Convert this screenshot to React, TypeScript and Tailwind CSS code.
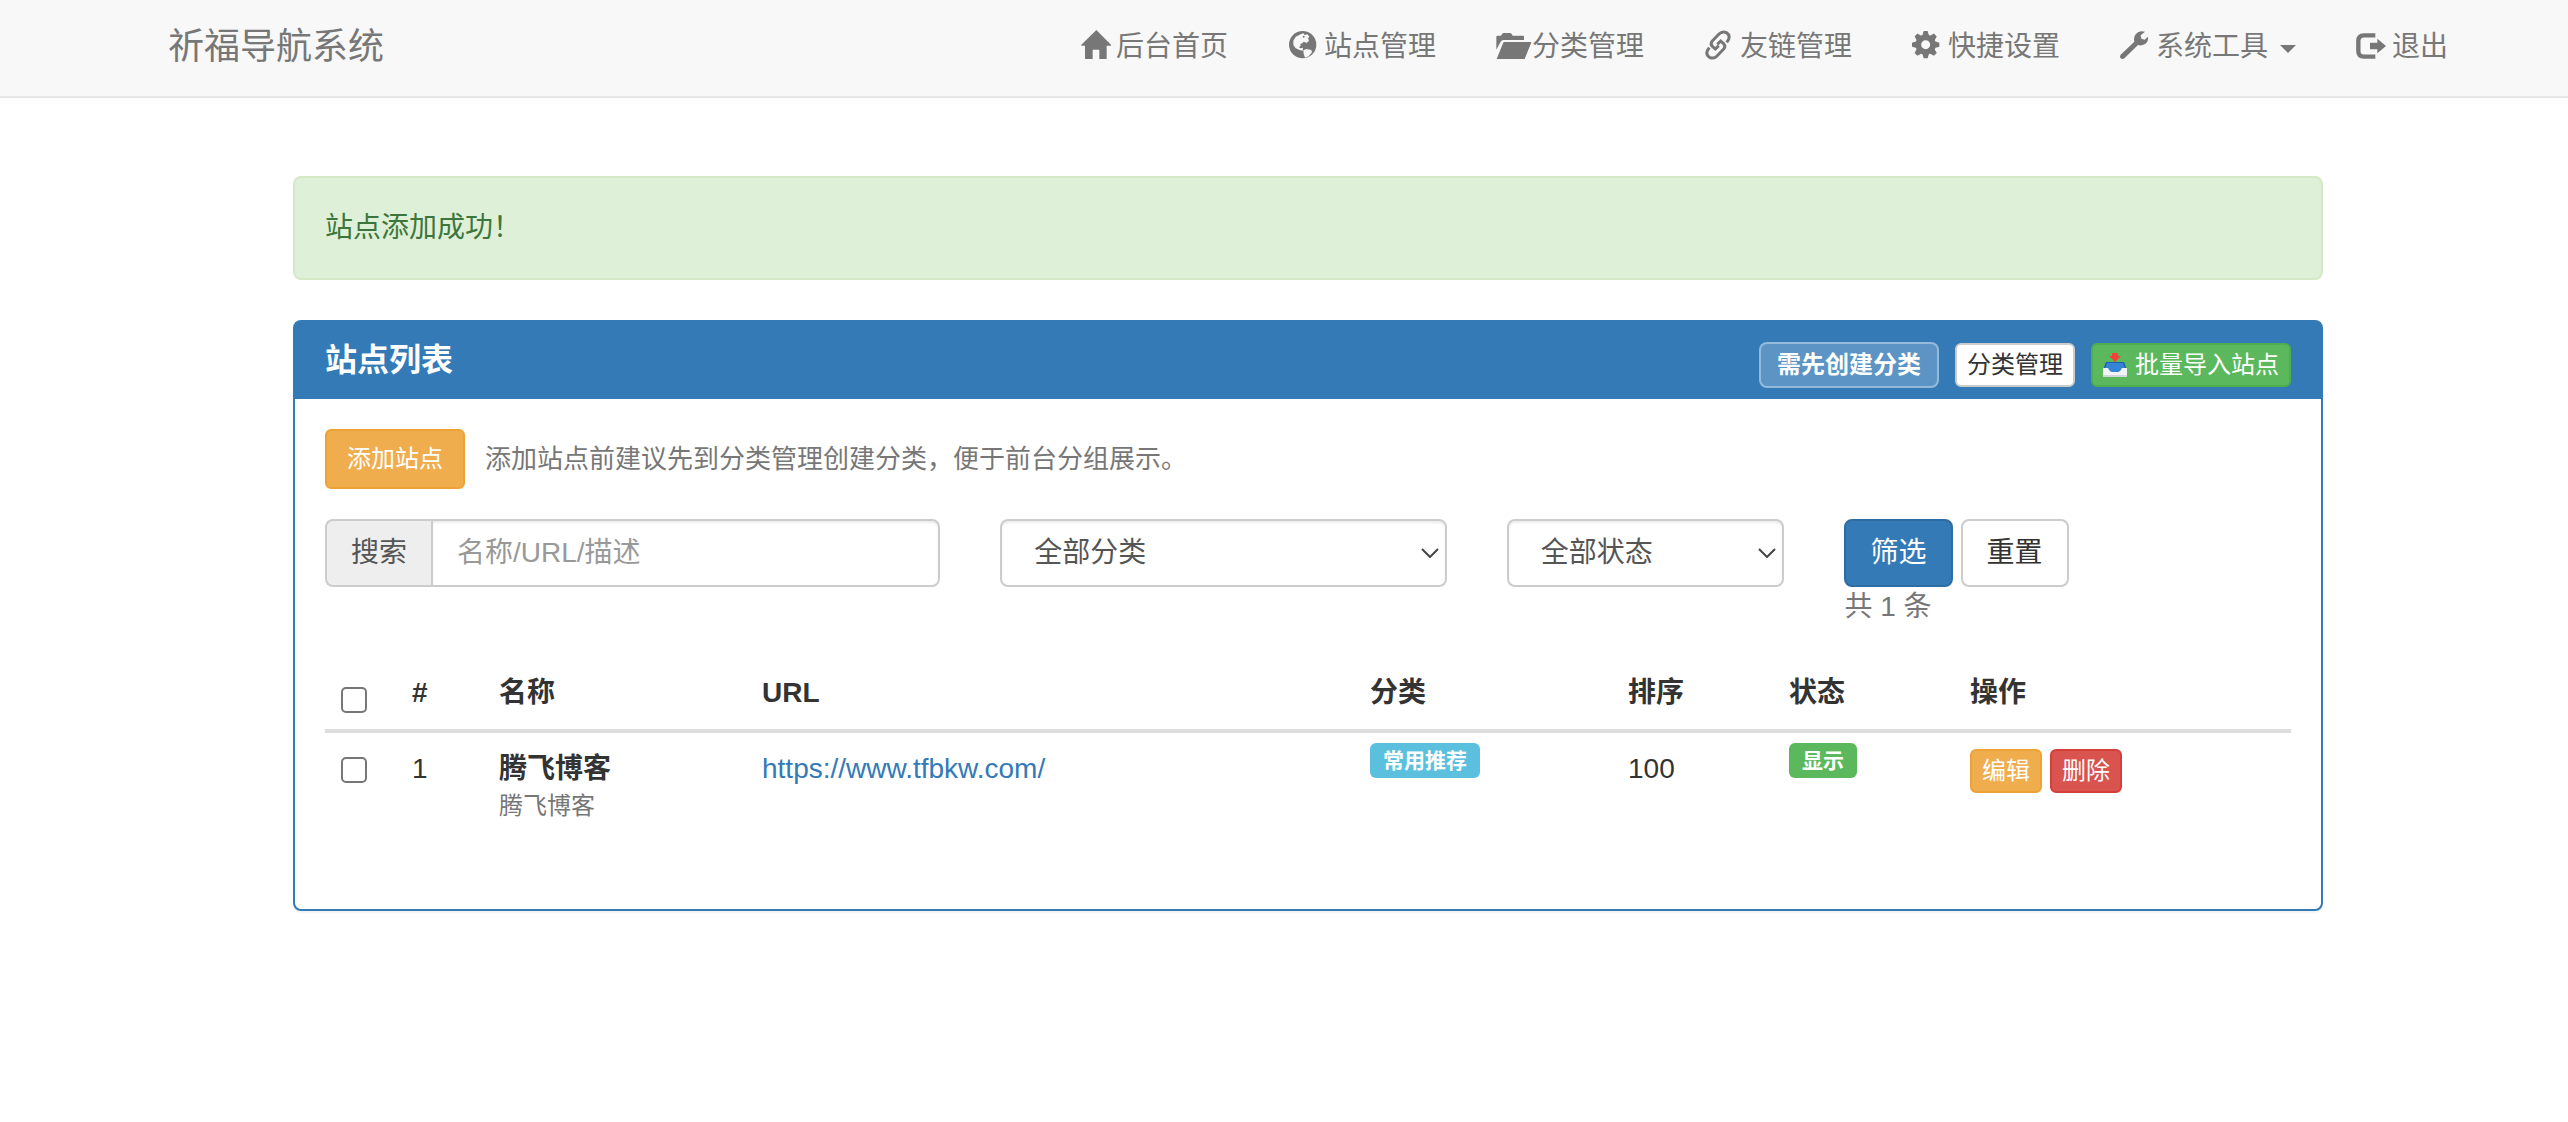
import { useState, type ReactNode } from 'react';

type IconName = 'home' | 'globe' | 'folder' | 'link' | 'gear' | 'wrench' | 'logout';

const iconShapes: Record<IconName, ReactNode> = {
  home: (
    <path d="M49 -9 L93 35 Q94 38 91 38 H80 V78 H58 V50 H38 V78 H15 V38 H6 Q2 38 4 35 Z" />
  ),
  globe: (
    <>
      <circle cx="44" cy="35" r="41" />
      <path
        className="fill-[#f8f8f8]"
        d="M38 4 L46 1 L50 6 L58 4 L64 11 L60 16 L63 23 L56 30 L47 26 L43 31 L37 33 L38 38 L33 43 L38 46 L45 44 L44 53 L36 52 L23 46 L16 36 L16 23 L23 11 Z"
      />
      <path className="fill-[#f8f8f8]" d="M46 52 L55 48 L70 51 L72 58 L62 70 L51 74 L47 62 Z" />
      <circle cx="47" cy="11" r="3" />
    </>
  ),
  folder: (
    <>
      <path d="M1 12 Q1 8 5 8 H15 L18 3 Q20 0 23 0 H42 Q45 0 47 3 L50 8 H81 Q84 8 84 11 V21 H22 Q17 21 14 26 L1 50 Z" />
      <path d="M26 27 H103 Q107 27 105 31 L86 78 H2 L21 31 Q22 27 26 27 Z" />
    </>
  ),
  link: (
    <g fill="none" stroke="currentColor" strokeWidth="9">
      <path d="M68 28 L74 19 Q79 6 67 -1 Q55 -7 45 3 L24 25 Q18 34 26 41 L34 48 L44 38" />
      <path d="M16 44 L10 53 Q5 66 17 73 Q29 79 39 69 L60 47 Q66 38 58 31 L50 24 L40 34" />
    </g>
  ),
  gear: (
    <g transform="translate(41 35)">
      <circle r="22" fill="none" stroke="currentColor" strokeWidth="17" />
      {[0, 45, 90, 135, 180, 225, 270, 315].map((angle) => (
        <path key={angle} d="M-10 -27 L-6 -41 H6 L10 -27 Z" transform={`rotate(${angle})`} />
      ))}
    </g>
  ),
  wrench: (
    <path d="M2 65 L43 26 Q39 7 54 -2 Q64 -8 75 -4 L62 7 L64 17 L74 20 L84 11 Q86 25 75 33 Q65 40 54 36 L14 75 Q8 80 2 76 Q-3 71 2 65 Z" />
  ),
  logout: (
    <>
      <path
        fill="none"
        stroke="currentColor"
        strokeWidth="13"
        d="M58 7 H24 Q7 7 7 24 V54 Q7 71 24 71 H58"
      />
      <path d="M42 29 H64 V17 L90 39 L64 61 V49 H42 Z" />
    </>
  ),
};

function Icon({ name }: { name: IconName }) {
  return (
    <svg viewBox="0 0 84 84" className="h-7 w-7 shrink-0 overflow-visible fill-current" aria-hidden="true">
      {iconShapes[name]}
    </svg>
  );
}

function InboxIcon() {
  return (
    <svg viewBox="0 0 24 24" className="h-6 w-6 shrink-0" aria-hidden="true">
      <path d="M3 9 H21 L24 17 H0 Z" fill="#1f5fae" />
      <path d="M4 10 H20 L22 16 L16 20 H8 L2 16 Z" fill="#3584d6" />
      <path d="M0 15 H5 Q7 19 9 19 H15 Q17 19 19 15 H24 V23 Q24 24 23 24 H1 Q0 24 0 23 Z" fill="#f1f3f4" />
      <path d="M0 22 H24 V23 Q24 24 23 24 H1 Q0 24 0 23 Z" fill="#d3d6da" />
      <path d="M9 0 H15 V3 H18 L12 9 L6 3 H9 Z" fill="#f0443b" />
    </svg>
  );
}

const navItems: { label: string; icon: IconName }[] = [
  { label: '后台首页', icon: 'home' },
  { label: '站点管理', icon: 'globe' },
  { label: '分类管理', icon: 'folder' },
  { label: '友链管理', icon: 'link' },
  { label: '快捷设置', icon: 'gear' },
];

const sites = [
  {
    id: 1,
    name: '腾飞博客',
    description: '腾飞博客',
    url: 'https://www.tfbkw.com/',
    category: '常用推荐',
    order: 100,
    status: '显示',
  },
];

function Navbar() {
  const itemClass = 'flex items-center gap-2 px-[30px] pt-[27px] pb-[29px] leading-10';

  return (
    <header className="border-b-2 border-[#e7e7e7] bg-[#f8f8f8] pl-12 text-[#777]">
      <div className="mx-auto flex max-w-[2340px] justify-between">
        <a href="#" className="px-[30px] pt-[27px] pb-[29px] text-4xl leading-10">
          祈福导航系统
        </a>
        <nav className="flex">
          {navItems.map((item) => (
            <a key={item.label} href="#" className={itemClass}>
              <Icon name={item.icon} />
              {item.label}
            </a>
          ))}
          <button type="button" aria-haspopup="menu" className={itemClass}>
            <Icon name="wrench" />
            系统工具
            <svg viewBox="0 0 16 8" className="mt-1 ml-1 h-2 w-4 fill-current" aria-hidden="true">
              <path d="M0 0 H16 L8 8 Z" />
            </svg>
          </button>
          <a href="#" className={itemClass}>
            <Icon name="logout" />
            退出
          </a>
        </nav>
      </div>
    </header>
  );
}

function Select({ label, options }: { label: string; options: string[] }) {
  return (
    <div className="relative">
      <select
        aria-label={label}
        className="h-[68px] w-full appearance-none rounded-lg border-2 border-[#ccc] bg-white px-8 text-[#555] shadow-[inset_0_2px_2px_rgba(0,0,0,0.075)]"
      >
        {options.map((option) => (
          <option key={option}>{option}</option>
        ))}
      </select>
      <svg
        viewBox="0 0 18 10"
        className="pointer-events-none absolute top-[29px] right-2 h-2.5 w-[18px] fill-none stroke-[#444] stroke-2"
        aria-hidden="true"
      >
        <path d="M1 1 L9 9 L17 1" />
      </svg>
    </div>
  );
}

function Filters() {
  const [keyword, setKeyword] = useState('');

  return (
    <form className="-mx-[30px] mt-[30px] grid grid-cols-12" onSubmit={(e) => e.preventDefault()}>
      <div className="col-span-4 px-[30px]">
        <div className="flex h-[68px]">
          <label
            htmlFor="keyword"
            className="flex shrink-0 items-center rounded-l-lg border-2 border-r-0 border-[#ccc] bg-[#eee] px-6 text-[#555]"
          >
            搜索
          </label>
          <input
            id="keyword"
            type="text"
            value={keyword}
            onChange={(e) => setKeyword(e.target.value)}
            placeholder="名称/URL/描述"
            className="min-w-0 flex-1 rounded-r-lg border-2 border-[#ccc] px-6 text-[#555] shadow-[inset_0_2px_2px_rgba(0,0,0,0.075)] placeholder:text-[#999]"
          />
        </div>
      </div>
      <div className="col-span-3 px-[30px]">
        <Select label="分类" options={['全部分类', '常用推荐']} />
      </div>
      <div className="col-span-2 px-[30px]">
        <Select label="状态" options={['全部状态', '显示', '隐藏']} />
      </div>
      <div className="col-span-3 px-[30px]">
        <div className="flex gap-2">
          <button
            type="submit"
            className="h-[68px] rounded-lg border-2 border-[#2e6da4] bg-[#337ab7] px-6 text-white"
          >
            筛选
          </button>
          <button
            type="button"
            onClick={() => setKeyword('')}
            className="h-[68px] rounded-lg border-2 border-[#ccc] bg-white px-6"
          >
            重置
          </button>
        </div>
        <div className="text-[#777]">共 {sites.length} 条</div>
      </div>
    </form>
  );
}

function Checkbox({ label }: { label: string }) {
  return (
    <input
      type="checkbox"
      aria-label={label}
      className="mt-2 block h-[26px] w-[26px] appearance-none rounded-[5px] border-2 border-[#767676] bg-white checked:bg-[#337ab7]"
    />
  );
}

function SiteTable() {
  const head = 'border-b-4 border-[#ddd] p-4 text-left align-bottom font-bold';
  const label = 'flex h-[35px] w-fit items-center rounded-md px-[13px] text-[21px] font-bold leading-none text-white';

  return (
    <table className="mt-[30px] mb-10 w-full table-fixed border-separate border-spacing-0">
      <colgroup>
        <col className="w-[71px]" />
        <col className="w-[87px]" />
        <col className="w-[263px]" />
        <col className="w-[608px]" />
        <col className="w-[258px]" />
        <col className="w-[161px]" />
        <col className="w-[181px]" />
        <col className="w-[337px]" />
      </colgroup>
      <thead>
        <tr>
          <th className={head}>
            <Checkbox label="全选" />
          </th>
          <th className={head}>#</th>
          <th className={head}>名称</th>
          <th className={head}>URL</th>
          <th className={head}>分类</th>
          <th className={head}>排序</th>
          <th className={head}>状态</th>
          <th className={head}>操作</th>
        </tr>
      </thead>
      <tbody>
        {sites.map((site) => (
          <tr key={site.id} className="align-top">
            <td className="p-4">
              <Checkbox label={site.name} />
            </td>
            <td className="p-4">{site.id}</td>
            <td className="p-4">
              <strong className="block">{site.name}</strong>
              <span className="block text-2xl leading-[34px] text-[#777]">{site.description}</span>
            </td>
            <td className="p-4">
              <a href={site.url} className="text-[#337ab7]">
                {site.url}
              </a>
            </td>
            <td className="px-4 pt-2.5">
              <span className={`${label} bg-[#5bc0de]`}>{site.category}</span>
            </td>
            <td className="p-4">{site.order}</td>
            <td className="px-4 pt-2.5">
              <span className={`${label} bg-[#5cb85c]`}>{site.status}</span>
            </td>
            <td className="p-4">
              <div className="flex gap-2">
                <button
                  type="button"
                  className="h-11 rounded-md border-2 border-[#eea236] bg-[#f0ad4e] px-2.5 text-2xl text-white"
                >
                  编辑
                </button>
                <button
                  type="button"
                  className="h-11 rounded-md border-2 border-[#d43f3a] bg-[#d9534f] px-2.5 text-2xl text-white"
                >
                  删除
                </button>
              </div>
            </td>
          </tr>
        ))}
      </tbody>
    </table>
  );
}

export default function App() {
  return (
    <div className="min-h-screen bg-white font-['Liberation_Sans','Noto_Sans_CJK_SC',sans-serif] text-[28px] leading-10 text-[#333]">
      <Navbar />
      <main className="pt-[78px] pl-12">
        <div className="mx-auto max-w-[2030px]">
          <div
            role="alert"
            className="rounded-lg border-2 border-[#d6e9c6] bg-[#dff0d8] p-[30px] text-[#3c763d]"
          >
            站点添加成功！
          </div>

          <section className="mt-10 rounded-lg border-2 border-[#337ab7] bg-white shadow-[0_2px_2px_rgba(0,0,0,0.05)]">
            <div className="flex items-start justify-between bg-[#337ab7] px-[30px] pt-5 pb-[11px] text-white">
              <h3 className="text-[32px] leading-9 font-bold">站点列表</h3>
              <div className="flex items-center gap-4 text-2xl">
                <span className="flex h-[46px] items-center rounded-lg border-2 border-white/35 bg-white/20 px-4 font-bold">
                  需先创建分类
                </span>
                <a
                  href="#"
                  className="flex h-11 items-center rounded-md border-2 border-[#ccc] bg-white px-2.5 text-[#333]"
                >
                  分类管理
                </a>
                <a
                  href="#"
                  className="flex h-11 items-center gap-2 rounded-md border-2 border-[#4cae4c] bg-[#5cb85c] px-2.5"
                >
                  <InboxIcon />
                  批量导入站点
                </a>
              </div>
            </div>

            <div className="p-[30px]">
              <div className="flex items-center gap-5">
                <button
                  type="button"
                  className="h-[60px] rounded-md border-2 border-[#eea236] bg-[#f0ad4e] px-5 text-2xl text-white"
                >
                  添加站点
                </button>
                <p className="text-[26px] text-[#777]">添加站点前建议先到分类管理创建分类，便于前台分组展示。</p>
              </div>
              <Filters />
              <SiteTable />
            </div>
          </section>
        </div>
      </main>
    </div>
  );
}
